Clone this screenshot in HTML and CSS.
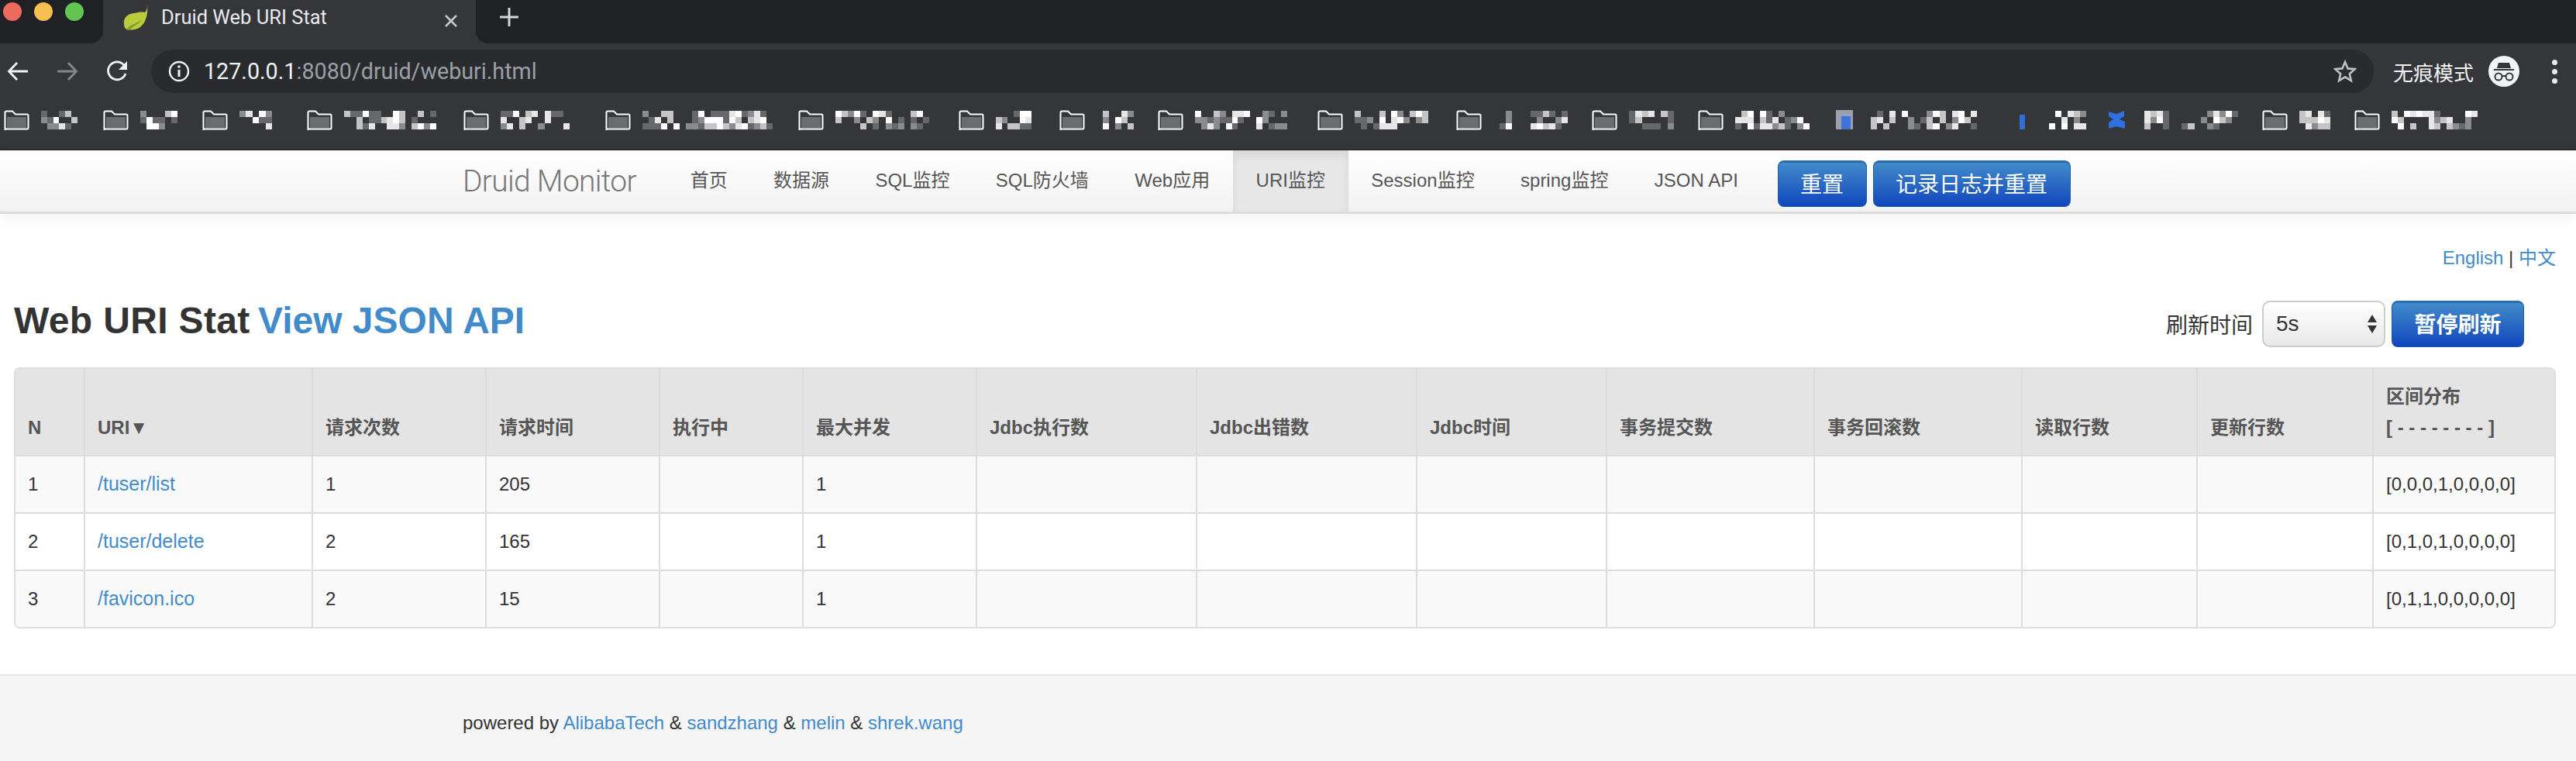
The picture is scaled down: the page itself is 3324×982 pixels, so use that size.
FILE: index.html
```html
<!DOCTYPE html>
<html lang="zh-CN">
<head>
<meta charset="UTF-8" />
<meta name="viewport" content="width=device-width, initial-scale=1" />
<title>Druid Web URI Stat</title>
<link rel="stylesheet" href="styles.css">
</head>
<body>

<div class="tabstrip">
  <div class="lights">
    <span class="light red"></span>
    <span class="light yellow"></span>
    <span class="light green"></span>
  </div>
  <div class="tab">
    <svg class="favicon" width="34" height="34" viewBox="0 0 34 34">
      <path d="M32 1c0 5-1 8-3 10-4-1-9 0-14 1C7 13 1 17 2 26c0 3 1 5 3 7 5 1 14 1 19-4 7-6 9-17 8-28z" fill="#bccb3c"/>
      <path d="M5 33c6-7 14-8 21-13-5 6-13 9-17 14z" fill="#7d9a30"/>
    </svg>
    <span class="tab-title">Druid Web URI Stat</span>
    <svg class="tab-close" width="18" height="18" viewBox="0 0 18 18"><path d="M2 2l14 14M16 2L2 16" stroke="#c4c7c5" stroke-width="2.6"/></svg>
  </div>
  <div class="strip-rest">
    <svg class="new-tab" width="24" height="24" viewBox="0 0 24 24"><path d="M12 1v22M1 12h22" stroke="#d4d6d8" stroke-width="3" stroke-linecap="round"/></svg>
  </div>
</div>

<div class="toolbar">
  <svg class="tool-icon" width="28" height="28" viewBox="0 0 28 28"><path d="M27 14H3M13 3L2.500 14 13 25" fill="none" stroke="#f1f3f4" stroke-width="2.800"/></svg>
  <svg class="tool-icon" width="28" height="28" viewBox="0 0 28 28"><path d="M1 14h24M15 3l10.500 11L15 25" fill="none" stroke="#83868a" stroke-width="2.800"/></svg>
  <svg class="tool-icon" width="30" height="30" viewBox="0 0 30 30"><path d="M25 18a11.500 11.500 0 1 1-2-11" fill="none" stroke="#f1f3f4" stroke-width="2.800"/><path d="M27 2v11H16z" fill="#f1f3f4"/></svg>
  <div class="omnibox">
    <svg width="28" height="28" viewBox="0 0 28 28"><circle cx="14" cy="14" r="12" fill="none" stroke="#f1f3f4" stroke-width="2.400"/><path d="M14 12v9" stroke="#f1f3f4" stroke-width="3"/><circle cx="14" cy="8" r="1.800" fill="#f1f3f4"/></svg>
    <span class="url">127.0.0.1<span class="url-dim">:8080/druid/weburi.html</span></span>
    <svg class="star" width="30" height="30" viewBox="0 0 30 30"><path d="M15 3l3.600 8.400 9 .8-6.800 6 2 8.800-7.800-4.700L7.200 27l2-8.800-6.800-6 9-.8z" fill="none" stroke="#bdc1c6" stroke-width="2.600"/></svg>
  </div>
  <span class="incognito-label">无痕模式</span>
  <svg class="incognito" width="40" height="40" viewBox="0 0 40 40">
    <circle cx="20" cy="20" r="20" fill="#f1f3f4"/>
    <path d="M13 9h14l2 7H11zM7 17h26v2H7z" fill="#35363a"/>
    <circle cx="13" cy="27" r="4.500" fill="none" stroke="#35363a" stroke-width="2"/>
    <circle cx="27" cy="27" r="4.500" fill="none" stroke="#35363a" stroke-width="2"/>
    <path d="M17 26h6" stroke="#35363a" stroke-width="2"/>
  </svg>
  <div class="menu-dots"><i></i><i></i><i></i></div>
</div>

<div class="bookmarks" id="bookmarks"></div>

<nav class="navbar">
  <div class="container nav-inner">
    <a class="brand">Druid Monitor</a>
    <ul class="nav">
      <li>首页</li>
      <li>数据源</li>
      <li>SQL监控</li>
      <li>SQL防火墙</li>
      <li>Web应用</li>
      <li class="active">URI监控</li>
      <li>Session监控</li>
      <li>spring监控</li>
      <li>JSON API</li>
    </ul>
    <a class="btn btn-reset">重置</a>
    <a class="btn btn-log">记录日志并重置</a>
  </div>
</nav>

<main class="content">
  <div class="lang"><a>English</a> | <a>中文</a></div>

  <div class="title-row">
    <h3><span>Web URI Stat</span> <a>View JSON API</a></h3>
    <div class="refresh">
      <label>刷新时间</label>
      <div class="select-box">
        <span>5s</span>
        <svg width="14" height="26" viewBox="0 0 14 26"><path d="M7 1l6 10H1zM7 25L1 15h12z" fill="#333"/></svg>
      </div>
      <a class="btn btn-pause">暂停刷新</a>
    </div>
  </div>

  <div class="table-wrap">
    <table>
      <colgroup>
        <col class="c-n"><col class="c-uri"><col class="c-224"><col class="c-224"><col class="c-185"><col class="c-224"><col class="c-284"><col class="c-284"><col class="c-245"><col class="c-268"><col class="c-268"><col class="c-226"><col class="c-227"><col class="c-last">
      </colgroup>
      <thead>
        <tr>
          <th>N</th>
          <th>URI▼</th>
          <th>请求次数</th>
          <th>请求时间</th>
          <th>执行中</th>
          <th>最大并发</th>
          <th>Jdbc执行数</th>
          <th>Jdbc出错数</th>
          <th>Jdbc时间</th>
          <th>事务提交数</th>
          <th>事务回滚数</th>
          <th>读取行数</th>
          <th>更新行数</th>
          <th>区间分布<br>[ - - - - - - - - ]</th>
        </tr>
      </thead>
      <tbody>
        <tr>
          <td>1</td><td><a>/tuser/list</a></td><td>1</td><td>205</td><td></td><td>1</td><td></td><td></td><td></td><td></td><td></td><td></td><td></td><td>[0,0,0,1,0,0,0,0]</td>
        </tr>
        <tr>
          <td>2</td><td><a>/tuser/delete</a></td><td>2</td><td>165</td><td></td><td>1</td><td></td><td></td><td></td><td></td><td></td><td></td><td></td><td>[0,1,0,1,0,0,0,0]</td>
        </tr>
        <tr>
          <td>3</td><td><a>/favicon.ico</a></td><td>2</td><td>15</td><td></td><td>1</td><td></td><td></td><td></td><td></td><td></td><td></td><td></td><td>[0,1,1,0,0,0,0,0]</td>
        </tr>
      </tbody>
    </table>
  </div>
</main>

<footer class="footer">
  <div class="container">powered by <a>AlibabaTech</a> &amp; <a>sandzhang</a> &amp; <a>melin</a> &amp; <a>shrek.wang</a></div>
</footer>

<script src="script.js"></script>
</body>
</html>
```

FILE: styles.css
```css
* {
  box-sizing: border-box;
}
body {
  margin: 0;
  width: 3324px;
  height: 982px;
  overflow: hidden;
  background: #fff;
  color: #333;
  font-family: "Liberation Sans", "Noto Sans CJK SC", sans-serif;
  font-size: 24px;
}
a {
  color: #428bca;
  text-decoration: none;
}

/* browser chrome */
.tabstrip {
  height: 56px;
  background: #35363a;
  display: flex;
}
.lights {
  width: 133px;
  background: #202124;
  border-bottom-right-radius: 16px;
  display: flex;
  gap: 16px;
  padding: 3px 0 0 4px;
}
.light {
  width: 24px;
  height: 24px;
  border-radius: 50%;
}
.red { background: #ed6a5e; }
.yellow { background: #f5bf4f; }
.green { background: #62c554; }
.tab {
  width: 481px;
  display: flex;
  align-items: flex-start;
  padding: 5px 23px 0 25px;
  color: #e8eaed;
  font-family: Roboto, sans-serif;
  font-size: 25.500px;
}
.tab-title {
  margin-left: 16px;
  line-height: 34px;
  flex: 1;
}
.tab-close {
  margin-top: 13px;
}
.strip-rest {
  flex: 1;
  background: #202124;
  border-bottom-left-radius: 16px;
  padding: 10px 0 0 31px;
}

.toolbar {
  height: 64px;
  background: #35363a;
  display: flex;
  align-items: center;
  padding: 8px 0 0 9px;
}
.toolbar .tool-icon {
  margin-right: 36px;
}
.toolbar .tool-icon:nth-child(3) {
  margin-right: 28px;
}
.omnibox {
  width: 2868px;
  height: 56px;
  background: #292b2e;
  border-radius: 28px;
  display: flex;
  align-items: center;
  padding: 0 22px;
}
.url {
  margin-left: 18px;
  flex: 1;
  color: #f1f3f4;
  font-family: Roboto, sans-serif;
  font-size: 28.700px;
}
.url-dim {
  color: #9aa0a6;
}
.incognito-label {
  margin-left: 25px;
  width: 103px;
  color: #f1f3f4;
  font-size: 26px;
  font-family: "Noto Sans CJK SC", sans-serif;
  white-space: nowrap;
}
.incognito {
  margin-left: 20px;
}
.menu-dots {
  margin-left: 42px;
  display: flex;
  flex-direction: column;
  gap: 5px;
}
.menu-dots i {
  display: block;
  width: 7px;
  height: 7px;
  border-radius: 50%;
  background: #e8eaed;
}

.bookmarks {
  height: 74px;
  background: #35363a;
  border-bottom: 1px solid #1c1d1f;
  display: flex;
  padding: 22px 0 0 5px;
}
.bookmark {
  display: flex;
  gap: 15px;
  height: 26px;
  flex: none;
}
.mosaic {
  display: grid;
  grid-auto-flow: column;
  grid-template-rows: repeat(3, 8px);
  height: 24px;
  margin-top: 1px;
}

/* druid page */
.container {
  width: 2130px;
  margin: 0 auto;
}
.navbar {
  height: 82px;
  background: linear-gradient(#fff, #f2f2f2);
  border-bottom: 3px solid #dcdcdc;
  box-shadow: 0 4px 16px rgba(0, 0, 0, 0.06);
}
.nav-inner {
  display: flex;
  align-items: flex-start;
}
.brand {
  width: 223px;
  margin-right: 41px;
  margin-top: 15px;
  color: #777;
  font-family: Roboto, sans-serif;
  font-weight: 300;
  font-size: 39px;
  letter-spacing: -0.7px;
  line-height: 50px;
  white-space: nowrap;
}
.nav {
  list-style: none;
  margin: 0 21px 0 0;
  padding: 0;
  display: flex;
}
.nav li {
  height: 79px;
  line-height: 78px;
  padding: 0 29.700px;
  color: #555;
  white-space: nowrap;
}
.nav li.active {
  background: #e7e7e7;
  box-shadow: inset 0 6px 12px rgba(0, 0, 0, 0.08);
}
.btn {
  display: block;
  height: 60px;
  line-height: 58px;
  text-align: center;
  color: #fff;
  font-size: 28px;
  background: linear-gradient(#428bca, #1046bd);
  border: 1px solid #1f5aa6;
  border-top: 3px solid #2c6bb0;
  border-radius: 8px;
}
.btn-reset {
  width: 115px;
  margin-top: 13px;
}
.btn-log {
  width: 255px;
  margin: 13px 0 0 8px;
}
.content {
  padding: 0 26px 0 18px;
}
.lang {
  margin-top: 41px;
  line-height: 32px;
  text-align: right;
}
.title-row {
  margin-top: 39px;
  display: flex;
  justify-content: space-between;
  align-items: center;
}
h3 {
  margin: 0 0 8px;
  font-size: 48px;
  line-height: 52px;
  font-weight: bold;
}
h3 span {
  letter-spacing: 0.35px;
}
h3 a {
  margin-left: -3px;
}
.refresh {
  display: flex;
  align-items: center;
  margin-right: 41px;
}
.refresh label {
  font-size: 28px;
}
.select-box {
  width: 159px;
  height: 60px;
  margin: 0 8px 0 12px;
  padding: 0 8px 0 16px;
  display: flex;
  justify-content: space-between;
  align-items: center;
  font-size: 28px;
  background: linear-gradient(#fff, #e8e8e8);
  border: 2px solid #ccc;
  border-radius: 10px;
}
.btn-pause {
  width: 171px;
  font-weight: bold;
}
.table-wrap {
  margin-top: 26px;
  border: 2px solid #ddd;
  border-radius: 8px;
  overflow: hidden;
}
table {
  width: 100%;
  table-layout: fixed;
  border-collapse: separate;
  border-spacing: 0;
  line-height: 39.700px;
}
.c-n { width: 88px; }
.c-uri { width: 294px; }
.c-224 { width: 224px; }
.c-185 { width: 185px; }
.c-284 { width: 284px; }
.c-245 { width: 245px; }
.c-268 { width: 268px; }
.c-226 { width: 226px; }
.c-227 { width: 227px; }
.c-last { width: 235px; }
th, td {
  padding: 16px;
  text-align: left;
  border-left: 2px solid #ddd;
}
th:first-child, td:first-child {
  border-left: none;
}
th {
  background: #e4e4e4;
  color: #555;
  font-weight: bold;
  vertical-align: bottom;
}
td {
  border-top: 2px solid #ddd;
  white-space: nowrap;
}
td a {
  font-size: 25px;
}
tbody tr:nth-child(odd) td {
  background: #f9f9f9;
}
.footer {
  margin-top: 59px;
  height: 112px;
  background: #f5f5f5;
  border-top: 2px solid #e5e5e5;
  padding-top: 46px;
  line-height: 30px;
}
```

FILE: script.js
```js
// bookmark bar: names are blurred in the shot, so draw them as mosaics
// [item width, icon, text width]
const bookmarks = [
  [128, 'folder', 47], [128, 'folder', 48], [135, 'folder', 42], [202, 'folder', 119],
  [183, 'folder', 97], [249, 'folder', 168], [207, 'folder', 121], [130, 'folder', 46],
  [127, 'folder', 48], [206, 'folder', 119], [179, 'folder', 95], [175, 'folder', 96],
  [137, 'folder', 58], [175, 'folder', 96], [230, 'blue', 137], [123, 'thin', 48],
  [200, 'cross', 121], [119, 'folder', 40], [165, 'folder', 111]
];

const icons = {
  folder: '<path d="M4 9h25v14H4z" fill="#6b6c6f"/><path d="M1.500 25V3a1.500 1.500 0 0 1 1.500-1.500h8l4 4h15a1.500 1.500 0 0 1 1.500 1.500v16a1.500 1.500 0 0 1-1.500 1.500H3z" fill="none" stroke="#fff" stroke-width="2"/>',
  blue: '<rect x="3" width="22" height="25" fill="#9aa0b0"/><rect x="10" y="8" width="12" height="17" fill="#3f73d8"/>',
  thin: '<rect x="10" y="6" width="7" height="19" fill="#2f6fd6"/>',
  cross: '<path d="M2 2l10 3 10-4v7l-6 4 7 3v9l-11-3-10 3v-8l6-4-6-4z" fill="#2f6fe0"/>'
};

const shades = ['#35363a', '#35363a', '#35363a', '#67686b', '#8a8b8d', '#c4c4c4', '#e6e6e6', '#ffffff'];

let seed = 7;
function nextRandom() {
  seed = (seed * 9301 + 49297) % 233280;
  return seed / 233280;
}

const bar = document.getElementById('bookmarks');
bookmarks.forEach(([width, icon, textWidth]) => {
  const item = document.createElement('div');
  item.className = 'bookmark';
  item.style.width = width + 'px';
  const cols = Math.round(textWidth / 8);
  let cells = '';
  for (let i = 0; i < cols * 3; i++) {
    const color = shades[Math.floor(nextRandom() * shades.length)];
    cells += `<i style="width:${textWidth / cols}px;background:${color}"></i>`;
  }
  item.innerHTML = `<svg width="33" height="26" viewBox="0 0 33 26">${icons[icon]}</svg><div class="mosaic">${cells}</div>`;
  bar.appendChild(item);
});
```
